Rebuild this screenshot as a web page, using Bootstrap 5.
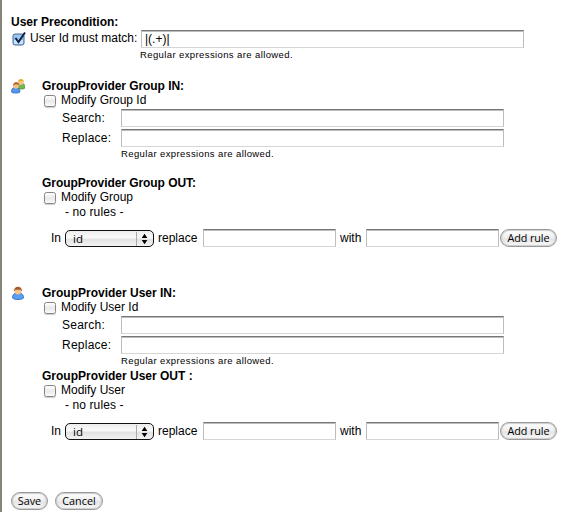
<!DOCTYPE html>
<html lang="en">
<head>
<meta charset="utf-8">
<meta name="viewport" content="width=device-width, initial-scale=1">
<title>Group provider rules</title>
<link href="https://cdn.jsdelivr.net/npm/bootstrap@5.3.0/dist/css/bootstrap.min.css" rel="stylesheet">
<style>
html,body{height:512px;overflow:hidden}
body{font:12px/14px "Liberation Sans",Arial,sans-serif;color:#000;background:#fff}
.page{height:512px;padding:15px 0 0 9px;border-left:2px solid #85857a}
h2{font-size:12px;line-height:14px;height:14px;font-weight:700;margin:0;white-space:nowrap}
.tight{letter-spacing:-.06px}
.line{display:flex;height:14px;white-space:nowrap}
.none{margin:1px 0 10px 23px;letter-spacing:.1px}
.field-row{display:flex;height:18px;align-items:center;white-space:nowrap}
.field-row+.field-row{margin-top:2px}
.first-row{margin-top:1px}
.match{width:111px;padding-bottom:2px}
.fields{margin:2px 0 0 20px}
.rule{margin-left:9px}
.rule span{padding-bottom:1px}
.w-in{width:14px}
.w-replace{width:49px;padding-left:4px}
.w-with{width:30px;padding-left:4px}
.form-control.txt{height:18px;min-height:0;width:383px;flex:none;padding:0 3px;border-radius:0;border:1px solid #bdbdbd;border-top-color:#777;border-bottom-color:#d6d6d6;box-shadow:inset 0 1px 0 #bcbcbc;font:12px/14px "Liberation Sans",Arial,sans-serif;color:#000;background:#fff}
.form-control.half{width:133px}
.hint{font-size:9.5px;line-height:14px;height:14px;letter-spacing:.39px;white-space:nowrap;margin-left:79px}
.hint.top-hint{margin-left:129px}
.form-check-input.chk{width:12px;height:12px;margin:2px 5px 0 2px;flex:none;border:1px solid #858585;border-radius:2.5px;background:linear-gradient(#fff,#e9e9e9 50%,#fafafa);box-shadow:0 1px 1px #ccc}
.tick{width:14px;height:15px;flex:none;margin:-2px 4px 0 1px}
.lbl{width:59px;flex:none;letter-spacing:.25px}
.section{display:flex;height:207px}
.group{margin-top:17px}
.ico{width:31px;flex:none}
.ico svg{display:block}
.out{margin-top:15px}
.out-near{margin-top:1px}
.pick{width:89px;height:17px;flex:none;border:1.5px solid #111;border-radius:5px;background:linear-gradient(#ededed,#fafafa 45%,#e2e2e2 55%,#f3f3f3);padding-left:7px;margin-top:1px;display:flex;align-items:center;font:11.5px/13px "Open Sans","Noto Sans",sans-serif}
.pick svg{margin-left:auto;height:14px;width:17px;border-left:1px solid #aaa}
.btn.pill{height:18px;padding:0;flex:none;border:1.5px solid #999;border-radius:9px;background:linear-gradient(#fff,#eee 50%,#e4e4e4 55%,#fafafa);box-shadow:inset 0 0 1px 1px #ccc;font:10.8px/14px "Open Sans","Noto Sans",sans-serif;color:#000;white-space:nowrap}
.pill.add{width:57px;margin-left:1px;letter-spacing:-.1px}
.actions{gap:7px;margin-top:-1px}
.save{width:37px}
.cancel{width:48px}
</style>
<script src="https://cdn.jsdelivr.net/npm/bootstrap@5.3.0/dist/js/bootstrap.bundle.min.js"></script>
</head>
<body>
<form class="page">
  <h2>User Precondition:</h2>
  <div class="field-row first-row">
    <svg class="tick" viewBox="0 0 14 15"><rect x="1" y="3" width="11" height="11" rx="2" fill="#9cc8f5" stroke="#4a6696"/><rect x="2" y="9" width="9" height="4" fill="#c5e6ff"/><path d="M3.500 7l3 4L13 1.500" fill="none" stroke="#102040" stroke-width="2"/></svg>
    <label class="match">User Id must match:</label>
    <input class="form-control txt" value="|(.+)|" aria-label="User Id pattern">
  </div>
  <div class="hint top-hint">Regular expressions are allowed.</div>

  <div class="section group">
    <div class="ico"><svg width="14" height="15" viewBox="0 0 14 15"><path d="M6 8c0-4 2-4 4-4s4 1 4 5l-2 1H7z" fill="#72b84c" stroke="#408a2c" stroke-width=".7"/><circle cx="10" cy="3.200" r="2.600" fill="#f6c58b"/><path d="M7 3c0-4 6-4 6 0l-1-1H9z" fill="#e7ad26"/><path d="M.5 13c0-4 2-4.500 4-4.500s4.500 1 4.500 4.500l-2 1H2z" fill="#5597e8" stroke="#2461bc" stroke-width=".7"/><circle cx="5" cy="7" r="2.700" fill="#f7bd88"/><path d="M2 7c0-5 6-5 6-1L6 5.500H4z" fill="#b5682f"/></svg></div>
    <div>
      <h2 class="tight">GroupProvider Group IN:</h2>
      <label class="line"><input type="checkbox" class="form-check-input chk">Modify Group Id</label>
      <div class="fields">
        <div class="field-row"><label class="lbl">Search:</label><input class="form-control txt" aria-label="Search"></div>
        <div class="field-row"><label class="lbl">Replace:</label><input class="form-control txt" aria-label="Replace"></div>
      </div>
      <div class="hint">Regular expressions are allowed.</div>
      <h2 class="out tight">GroupProvider Group OUT:</h2>
      <label class="line"><input type="checkbox" class="form-check-input chk">Modify Group</label>
      <div class="line none">- no rules -</div>
      <div class="field-row rule">
        <span class="w-in">In</span>
        <div class="pick">id<svg viewBox="0 0 17 14"><path d="M5 6l3-4.500 3 4.500zM5 8h6l-3 4.500z"/></svg></div>
        <span class="w-replace">replace</span>
        <input class="form-control txt half" aria-label="Replace text">
        <span class="w-with">with</span>
        <input class="form-control txt half" aria-label="With text">
        <button type="button" class="btn pill add">Add rule</button>
      </div>
    </div>
  </div>

  <div class="section">
    <div class="ico"><svg width="14" height="15" viewBox="0 0 14 15"><path d="M1.500 12c0-4 2-5 5.500-5s5.500 1 5.500 5c-2 2-9 2-11 0z" fill="#5b9ff0" stroke="#2461bc" stroke-width=".8"/><circle cx="7" cy="5" r="3.400" fill="#f9c28e"/><path d="M3 5.500c-.5-6.500 8.500-6.500 8 0L9.500 3.800h-5z" fill="#a45a28"/></svg></div>
    <div>
      <h2>GroupProvider User IN:</h2>
      <label class="line"><input type="checkbox" class="form-check-input chk">Modify User Id</label>
      <div class="fields">
        <div class="field-row"><label class="lbl">Search:</label><input class="form-control txt" aria-label="Search"></div>
        <div class="field-row"><label class="lbl">Replace:</label><input class="form-control txt" aria-label="Replace"></div>
      </div>
      <div class="hint">Regular expressions are allowed.</div>
      <h2 class="out-near">GroupProvider User OUT :</h2>
      <label class="line"><input type="checkbox" class="form-check-input chk">Modify User</label>
      <div class="line none">- no rules -</div>
      <div class="field-row rule">
        <span class="w-in">In</span>
        <div class="pick">id<svg viewBox="0 0 17 14"><path d="M5 6l3-4.500 3 4.500zM5 8h6l-3 4.500z"/></svg></div>
        <span class="w-replace">replace</span>
        <input class="form-control txt half" aria-label="Replace text">
        <span class="w-with">with</span>
        <input class="form-control txt half" aria-label="With text">
        <button type="button" class="btn pill add">Add rule</button>
      </div>
    </div>
  </div>

  <div class="d-flex actions">
    <button type="button" class="btn pill save">Save</button>
    <button type="button" class="btn pill cancel">Cancel</button>
  </div>
</form>
</body>
</html>
